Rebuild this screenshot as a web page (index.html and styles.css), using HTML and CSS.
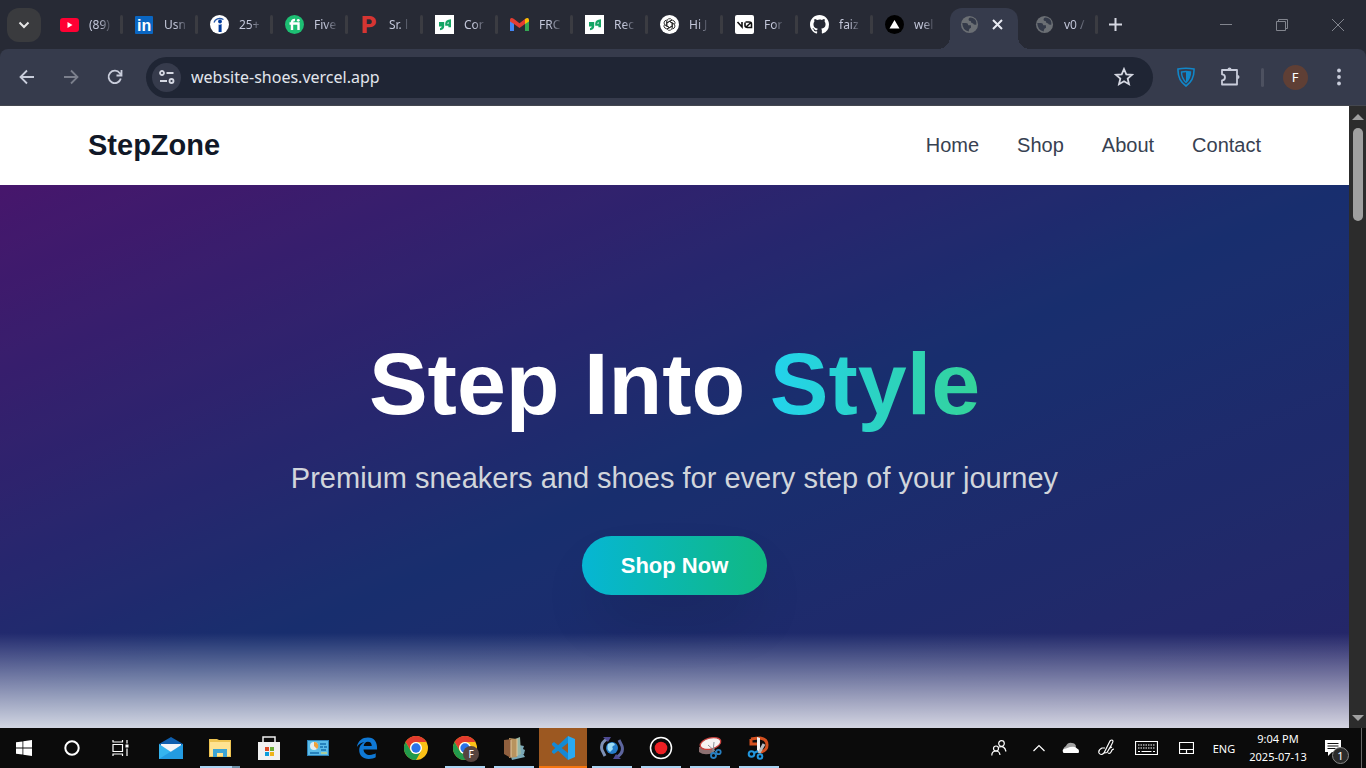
FILE: index.html
```html
<!DOCTYPE html>
<html lang="en">
  <head>
    <meta charset="UTF-8" />
    <meta name="viewport" content="width=device-width, initial-scale=1" />
    <title>StepZone</title>
    <link rel="stylesheet" href="styles.css">
  </head>
  <body>
    <svg class="defs" aria-hidden="true">
      <symbol id="globe" viewBox="0 0 20 20">
        <circle cx="10" cy="10" r="9" fill="#6b6f74" />
        <path d="M2.400 8.500h3.800q2.300.2 2.500 2.200h2.800v3q-2.200.2-2.300 3.600-6.500-.8-6.800-8.800z" fill="#343a49" />
        <path d="M10.500 2.600q-1.500.6-1.500 2.400.2 1.600 2.200 1.400.2 2.400 2.600 2.500.6 1.700 3.400 1.300.8-5.600-4.500-7.400z" fill="#343a49" />
      </symbol>
      <symbol id="quote" viewBox="0 0 19 19">
        <rect width="19" height="19" fill="#fff" />
        <path d="M4 7h5.200v4.300q0 3.400-4.200 3.900v-2q1.700-.3 1.800-1.700H4z" fill="#14a563" />
        <path d="M16 12.200h-2.600v-1.400h-3.200V8.600q.2-4 5.800-4.300z" fill="#14a563" />
        <path d="M12.300 8.800q0-1.500 1.300-1.900v1.900z" fill="#fff" />
      </symbol>
      <symbol id="chrome" viewBox="0 0 48 48">
        <circle cx="24" cy="24" r="24" fill="#fbc116" />
        <path d="M3.200 12A24 24 0 0 1 44.800 12H24a12 12 0 0 0-10.400 18z" fill="#e33b2e" />
        <path d="M3.200 12A24 24 0 0 0 24 48l10.400-18A12 12 0 0 1 13.600 30z" fill="#229a4c" />
        <circle cx="24" cy="24" r="12" fill="#fff" />
        <circle cx="24" cy="24" r="9.300" fill="#2a73e8" />
      </symbol>
    </svg>

    <!-- Tab strip -->
    <header class="tab-strip">
      <button class="tab-search" aria-label="Search tabs">
        <svg width="12" height="12" viewBox="0 0 12 12"><path d="M1.500 3.500L6 8l4.500-4.500" fill="none" stroke="#e6e6e6" stroke-width="2" /></svg>
      </button>
      <div class="tabs">
        <button class="tab">
          <svg class="favicon" viewBox="0 0 19 19"><rect y="3" width="19" height="14" rx="3" fill="#ff0033" /><path d="M7.500 7v6l5-3z" fill="#fff" /></svg>
          <span class="tab-title">(89)</span>
        </button>
        <button class="tab">
          <svg class="favicon" viewBox="0 0 19 19"><rect y="1" width="18" height="18" rx="1" fill="#0a66c2" /><text x="2" y="16" class="logo-in">in</text></svg>
          <span class="tab-title">Usn</span>
        </button>
        <button class="tab">
          <svg class="favicon" viewBox="0 0 19 19"><circle cx="9.500" cy="9.500" r="9.500" fill="#fff" /><path d="M4 7.500C5 4 9 2.300 13.500 4.500" fill="none" stroke="#2557a7" stroke-width="1.300" /><circle cx="10" cy="6.500" r="1.900" fill="#003a9b" /><path d="M8.600 9.500q1.500.5 3-.5V17h-3z" fill="#003a9b" /></svg>
          <span class="tab-title">25+</span>
        </button>
        <button class="tab">
          <svg class="favicon" viewBox="0 0 19 19"><circle cx="9.500" cy="9.500" r="9.500" fill="#1dbf73" /><path d="M4.500 8.500h9v6.500M7 15V7.300Q7 4.800 10 5" fill="none" stroke="#fff" stroke-width="2.400" /><circle cx="13.300" cy="5.300" r="1.400" fill="#fff" /></svg>
          <span class="tab-title">Five</span>
        </button>
        <button class="tab">
          <svg class="favicon" viewBox="0 0 19 19"><text x="1" y="18" class="logo-p">P</text></svg>
          <span class="tab-title">Sr. l</span>
        </button>
        <button class="tab">
          <svg class="favicon"><use href="#quote" /></svg>
          <span class="tab-title">Cor</span>
        </button>
        <button class="tab">
          <svg class="favicon" viewBox="0 0 19 19"><path d="M0 5v11h4V8z" fill="#4285f4" /><path d="M19 5v11h-4V8z" fill="#34a853" /><path d="M0 4.500Q1 2 4 4l5.500 4.200L15 4v5l-5.500 4L4 9 0 6.500z" fill="#e33d32" /><path d="M15 4q3-2 4 .5v2L15 9z" fill="#fbbc04" /></svg>
          <span class="tab-title">FRC</span>
        </button>
        <button class="tab">
          <svg class="favicon"><use href="#quote" /></svg>
          <span class="tab-title">Rec</span>
        </button>
        <button class="tab">
          <svg class="favicon" viewBox="0 0 20 20"><circle cx="10" cy="10" r="10" fill="#fff" /><g fill="none" stroke="#222" stroke-width=".9"><path id="knot" d="M7.200 11.600V6.700a2.900 2.900 0 0 1 5.300-1.600M7.200 8.300l4.300-2.500" /><use href="#knot" transform="rotate(60 10 10)" /><use href="#knot" transform="rotate(120 10 10)" /><use href="#knot" transform="rotate(180 10 10)" /><use href="#knot" transform="rotate(240 10 10)" /><use href="#knot" transform="rotate(300 10 10)" /></g></svg>
          <span class="tab-title">Hi J</span>
        </button>
        <button class="tab">
          <svg class="favicon" viewBox="0 0 19 19"><rect width="19" height="19" rx="2" fill="#fff" /><path d="M2.500 7l4.500 5V7M10.500 7H14q2.500 0 2.500 2v3.500h-4q-2.500 0-2.500-2V7.500M10.500 12.500l6-5.500" fill="none" stroke="#111" stroke-width="1.600" /></svg>
          <span class="tab-title">For</span>
        </button>
        <button class="tab">
          <svg class="favicon" viewBox="0 0 16 16"><path fill="#fff" d="M8 0C3.580 0 0 3.580 0 8c0 3.540 2.290 6.530 5.470 7.590.4.070.55-.17.55-.38 0-.19-.01-.82-.01-1.490-2.010.37-2.530-.49-2.690-.94-.09-.23-.48-.94-.82-1.130-.28-.15-.68-.52-.01-.53.63-.01 1.080.58 1.230.82.72 1.210 1.870.87 2.330.66.070-.52.28-.87.51-1.070-1.780-.2-3.640-.89-3.640-3.950 0-.87.31-1.590.82-2.150-.08-.2-.36-1.020.08-2.120 0 0 .67-.21 2.200.82A7.650 7.650 0 0 1 8 3.860c.68 0 1.360.09 2 .27 1.530-1.040 2.200-.82 2.200-.82.44 1.100.16 1.920.08 2.120.51.56.82 1.270.82 2.150 0 3.070-1.870 3.750-3.650 3.950.29.25.54.73.54 1.480 0 1.070-.01 1.930-.01 2.200 0 .21.15.46.55.38A8.010 8.010 0 0 0 16 8c0-4.420-3.580-8-8-8z" /></svg>
          <span class="tab-title">faiz</span>
        </button>
        <button class="tab no-divider">
          <svg class="favicon" viewBox="0 0 19 19"><circle cx="9.500" cy="9.500" r="9.500" fill="#000" /><path d="M9.500 5l5 8.500h-10z" fill="#fff" /></svg>
          <span class="tab-title">wel</span>
        </button>
        <div class="tab active no-divider">
          <svg class="favicon"><use href="#globe" /></svg>
          <button class="tab-close" aria-label="Close tab">
            <svg width="11" height="11" viewBox="0 0 11 11"><path d="M1 1l9 9M10 1l-9 9" stroke="#e8eaf2" stroke-width="2" /></svg>
          </button>
        </div>
        <button class="tab">
          <svg class="favicon"><use href="#globe" /></svg>
          <span class="tab-title">v0 /</span>
        </button>
      </div>
      <button class="new-tab" aria-label="New tab">
        <svg width="13" height="13" viewBox="0 0 13 13"><path d="M6.500 0v13M0 6.500h13" stroke="#d6d8e2" stroke-width="2" /></svg>
      </button>
      <div class="window-controls">
        <button aria-label="Minimize"><svg width="12" height="12" viewBox="0 0 12 12"><path d="M0 5.500h12" /></svg></button>
        <button aria-label="Restore"><svg width="12" height="12" viewBox="0 0 12 12"><path d="M.5 2.500h9v9h-9zM2.500 2.500v-2h9v9h-2" /></svg></button>
        <button aria-label="Close"><svg width="12" height="12" viewBox="0 0 12 12"><path d="M0 0l12 12M12 0L0 12" /></svg></button>
      </div>
    </header>

    <!-- Address bar -->
    <div class="toolbar">
      <button class="tool" aria-label="Back"><svg width="16" height="16" viewBox="0 0 16 16"><path d="M15 8H2M8 1.500L1.500 8 8 14.500" /></svg></button>
      <button class="tool dim" aria-label="Forward"><svg width="16" height="16" viewBox="0 0 16 16"><path d="M1 8h13M8 1.500L14.500 8 8 14.500" /></svg></button>
      <button class="tool" aria-label="Reload"><svg width="16" height="16" viewBox="0 0 16 16"><path d="M13.800 9.500A6.200 6.200 0 1 1 12.800 4.200L14.500 6M14.500 1v5.500H9.500" /></svg></button>
      <div class="omnibox">
        <button class="site-info" aria-label="View site information">
          <svg width="16" height="16" viewBox="0 0 16 16"><circle cx="3" cy="4" r="2" /><path d="M7.500 4H14.500M1 12h7" /><circle cx="12.500" cy="12" r="2" /></svg>
        </button>
        <input class="url" type="text" aria-label="Address" value="website-shoes.vercel.app" />
        <button class="star" aria-label="Bookmark this tab">
          <svg width="20" height="20" viewBox="0 0 20 20"><path d="M10 2l2.300 5.300 5.700.5-4.300 3.800 1.300 5.600-5-3-5 3 1.300-5.600L2 7.800l5.700-.5z" /></svg>
        </button>
      </div>
      <button class="tool" aria-label="VPN extension">
        <svg width="18" height="20" viewBox="0 0 18 20"><path d="M1 2q8-1.500 16 0 .5 11-8 17Q.5 13 1 2z" stroke="#1187c9" stroke-width="1.600" /><path d="M4.500 5Q9 4 13.500 5 13.500 11 9 15.500 4.500 11 4.500 5z" stroke="#1187c9" stroke-width="1.400" /><path d="M9 4.500v11q4.500-4.500 4.500-10.500z" fill="#1187c9" stroke="none" /></svg>
      </button>
      <button class="tool" aria-label="Extensions">
        <svg width="20" height="20" viewBox="0 0 20 20"><path d="M2 3h15v14.500H2v-4.200a3 3 0 0 0 0-6z" stroke-linejoin="round" /><path d="M7.500 2.500a2 2 0 0 1 4 0zM17.500 8a2 2 0 0 1 0 4z" fill="#c9cddb" stroke="none" /></svg>
      </button>
      <span class="tool-divider"></span>
      <button class="tool" aria-label="Profile"><span class="avatar">F</span></button>
      <button class="tool" aria-label="Menu"><svg width="4" height="18" viewBox="0 0 4 18"><g fill="#c9cddb" stroke="none"><circle cx="2" cy="2.500" r="1.900" /><circle cx="2" cy="9" r="1.900" /><circle cx="2" cy="15.500" r="1.900" /></g></svg></button>
    </div>

    <!-- Web page -->
    <div class="viewport">
      <main class="page">
        <nav class="navbar">
          <a class="brand" href="#">StepZone</a>
          <div class="nav-links">
            <a href="#">Home</a>
            <a href="#">Shop</a>
            <a href="#">About</a>
            <a href="#">Contact</a>
          </div>
        </nav>
        <section class="hero">
          <h1>Step Into <span class="accent">Style</span></h1>
          <p>Premium sneakers and shoes for every step of your journey</p>
          <button class="shop-button">Shop Now</button>
        </section>
      </main>
      <div class="scrollbar">
        <svg width="12" height="6" viewBox="0 0 12 6"><path d="M6 0l6 6H0z" fill="#a0a0a0" /></svg>
        <div class="scroll-track"><div class="scroll-thumb"></div></div>
        <svg width="12" height="6" viewBox="0 0 12 6"><path d="M6 6l6-6H0z" fill="#a0a0a0" /></svg>
      </div>
    </div>

    <!-- Taskbar -->
    <footer class="taskbar">
      <div class="system-buttons">
        <button aria-label="Start"><svg width="16" height="16" viewBox="0 0 16 16" fill="#fff"><path d="M0 2.300L6.500 1.400v6.200H0zM7.300 1.300L16 0v7.600H7.300zM0 8.400h6.500v6.200L0 13.700zM7.300 8.400H16V16l-8.700-1.300z" /></svg></button>
        <button aria-label="Search"><svg width="16" height="16" viewBox="0 0 16 16"><circle cx="8" cy="8" r="6.700" fill="none" stroke="#fff" stroke-width="2" /></svg></button>
        <button aria-label="Task view"><svg width="17" height="16" viewBox="0 0 17 16" fill="none" stroke="#fff" stroke-width="1.200"><path d="M1 4.500h9.500v7H1zM1 0v2h9.500V0M1 16v-2h9.500v2M15 0v3.500M15 8.500V16" /><path d="M13.500 4.500h3v3h-3z" fill="#fff" stroke="none" /></svg></button>
      </div>
      <div class="app-buttons">
        <button aria-label="Mail"><svg width="24" height="24" viewBox="0 0 24 24"><path d="M0 8L12 1l12 7v4H0z" fill="#0f5fae" /><path d="M2 8h20v8H2z" fill="#f3f6f8" /><path d="M0 8l12 8 12-8v15H0z" fill="#35b4ee" /><path d="M0 23L24 8v15z" fill="#188bd8" opacity=".6" /></svg></button>
        <button class="running stacked" aria-label="File Explorer"><svg width="24" height="24" viewBox="0 0 24 24"><path d="M1 3h8l2 1h12v17H1z" fill="#edc351" /><path d="M2 6h20v14H2z" fill="#ffe391" /><path d="M5 21v-8h14v8h-4v-4H9v4z" fill="#3ca5d5" /></svg></button>
        <button aria-label="Store"><svg width="24" height="24" viewBox="0 0 24 24"><path d="M6 7V1h12v6" fill="none" stroke="#eee" stroke-width="1.500" /><path d="M1 6h22v18H1z" fill="#f1f1f1" /><path d="M8 11h4v4H8z" fill="#df4b26" /><path d="M13 11h4v4h-4z" fill="#6cad35" /><path d="M8 16h4v4H8z" fill="#0c9ddc" /><path d="M13 16h4v4h-4z" fill="#efb41a" /></svg></button>
        <button aria-label="Control Panel"><svg width="24" height="24" viewBox="0 0 24 24"><rect x="1.500" y="4.500" width="21" height="15" fill="#5bbce9" stroke="#2c80b6" /><circle cx="8" cy="10" r="4" fill="#e4edf2" /><path d="M8 10V6a4 4 0 0 1 3 7z" fill="#f2a13a" /><path d="M14 8h6M14 11h3M18 11h3M15 14h5M4 17h9" stroke="#176fae" stroke-width="1.500" /><path d="M15 17h6" stroke="#f7db53" /></svg></button>
        <button aria-label="Edge"><svg width="22" height="22" viewBox="0 0 24 24"><path fill="#0f78d4" d="M1 11C2 4 7 .5 13 .5c7 0 10.500 5 10 13H8.200c.3 4 3.300 6 7 6 2.500 0 4.800-.7 6.300-1.700v4.400C19.500 23.300 17 24 14 24 7.500 24 3.500 19.800 3.500 14.500 3.500 10 6 7 9.800 5.500 6 5.900 3 7.800 1 11zM8.400 9.800h8.800c0-3-1.500-4.700-4.200-4.700-2.600 0-4.200 1.800-4.600 4.700z" /></svg></button>
        <button aria-label="Chrome"><svg width="24" height="24"><use href="#chrome" /></svg></button>
        <button class="running" aria-label="Chrome, profile F"><svg width="24" height="24"><use href="#chrome" /></svg><span class="profile-badge">F</span></button>
        <button class="running" aria-label="Library"><svg width="24" height="24" viewBox="0 0 24 24"><path d="M8 18l12-2 3 5-13 3zM17 9l5 1-1 3 2 1-1 4-7 1z" fill="#7aa8b6" /><path d="M13 3l5-2 1 17-6 3z" fill="#96b6a6" /><path d="M7 2l8 1v18l-8 1z" fill="#b8935e" /><path d="M2 4l7-1v19l-7-4z" fill="#8f5f3e" /><path d="M9 4v17M15 3v17" stroke="#e1c79b" /></svg></button>
        <button class="running current" aria-label="Visual Studio Code"><svg width="24" height="24" viewBox="0 0 24 24"><path d="M17 0l7 3v18l-7 3z" fill="#29a9f1" /><path d="M1 7.500L3 6l14 11v7L1 9z" fill="#1688d4" /><path d="M1 16.500L3 18 17 7V0L1 15z" fill="#148bd3" /></svg></button>
        <button class="running" aria-label="Web sync"><svg width="24" height="24" viewBox="0 0 24 24"><circle cx="12" cy="12" r="6" fill="#257cc9" /><path d="M8 8q6-3 7 1-4 1-2 4l-3 3q-4-3-2-8z" fill="#9cdcf5" /><path d="M7 3Q0 7 2 14l3 6" fill="none" stroke="#7d90b4" stroke-width="3" /><path d="M17 21q7-4 5-11l-3-6" fill="none" stroke="#5d659e" stroke-width="3" /><path d="M3 1h8L8 6zM13 23h8l-5-5z" fill="#4e4a93" /></svg></button>
        <button class="running" aria-label="Recorder"><svg width="24" height="24" viewBox="0 0 24 24"><circle cx="12" cy="12" r="10.500" fill="#0b0b0b" stroke="#fff" stroke-width="1.500" /><circle cx="12" cy="12" r="6.300" fill="#ee2024" /></svg></button>
        <button class="running" aria-label="Snipping Tool"><svg width="24" height="24" viewBox="0 0 24 24"><path d="M1 11v5q5 4 14 1l3-7z" fill="#8d7071" /><ellipse cx="12.500" cy="7.500" rx="10.500" ry="5.500" transform="rotate(-14 12.500 7.500)" fill="#f6f3f3" stroke="#c8423e" stroke-width="1.300" /><path d="M10 9l8 7M16 6l-1 10" stroke="#8a9199" /><g fill="none" stroke="#287fc0" stroke-width="1.800"><circle cx="15.500" cy="19.500" r="2.500" /><circle cx="20.500" cy="16" r="2.200" /></g></svg></button>
        <button class="running" aria-label="Snip &amp; Sketch"><svg width="24" height="24" viewBox="0 0 24 24"><path d="M4 3q6-1 9-1 7 1 7 7 0 6-7 7M4 3v5h6" fill="none" stroke="#d4501f" stroke-width="3" /><path d="M10 1l3 1v15l-3-1z" fill="#f3f3f3" /><path d="M17 8l-5 9" stroke="#b8bbc0" stroke-width="3" /><g fill="none" stroke="#2296dd" stroke-width="2"><circle cx="4.500" cy="18" r="2.800" /><circle cx="13" cy="20.500" r="2.300" /><path d="M7 17l4-2" /></g></svg></button>
      </div>
      <div class="tray">
        <button class="tray-wide" aria-label="People"><svg width="16" height="16" viewBox="0 0 16 16"><circle cx="10.500" cy="3.500" r="2.800" /><circle cx="5" cy="8.500" r="2.500" /><path d="M.8 15.500q0-4.500 4.200-4.500 3.500 0 4 4M8 7q5.500-2 7 4.500" /></svg></button>
        <button class="tray-wide" aria-label="Show hidden icons"><svg width="12" height="8" viewBox="0 0 12 8"><path d="M.5 7L6 1.500 11.500 7" /></svg></button>
        <button class="tray-narrow" aria-label="OneDrive"><svg width="18" height="12" viewBox="0 0 18 12"><path d="M2 10Q0 6 4 4q2-4 6-3 3 0 4 3l-2 5z" fill="#a3a3a3" stroke="none" /><path d="M1.500 11Q-1 7 4 6.500l4-1.500q6-1 7 1.500 3 1 1.500 4.500z" fill="#fff" stroke="none" /></svg></button>
        <button class="tray-pen" aria-label="Windows Ink"><svg width="18" height="18" viewBox="0 0 18 18"><path d="M6 14L12 2q2-2 3 0 .5 1-6 11.500zM7 9H4q-4 2-3 5 2 3 5 0M10 14q2 1 3-1 1-3 3-3M12 9l2-1" /></svg></button>
        <button class="tray-key" aria-label="Touch keyboard"><svg width="23" height="14" viewBox="0 0 23 14"><path d="M.5.5h22v13H.5z" /><path d="M3 4h17M3 7h17" stroke-dasharray="1.500 1" /><path d="M3 10.500h2M6.500 10.500h10M18 10.500h2" /></svg></button>
        <button class="tray-pad" aria-label="Touchpad"><svg width="15" height="12" viewBox="0 0 15 12"><path d="M.5.5h14v11H.5zM.5 7.500h14M7.500 7.500v4" /></svg></button>
        <button class="tray-lang">ENG</button>
        <button class="tray-clock"><time>9:04 PM</time><time>2025-07-13</time></button>
        <button class="tray-note" aria-label="Notifications">
          <svg width="16" height="16" viewBox="0 0 16 16"><path d="M0 0h16v12H7l-4 4v-4H0z" fill="#fff" stroke="none" /><path d="M2.500 3.500h11M2.500 6h11M2.500 8.500h8" stroke="#111" /></svg>
          <span class="note-count">1</span>
        </button>
        <button class="show-desktop" aria-label="Show desktop"></button>
      </div>
    </footer>
  </body>
</html>
```

FILE: styles.css
```css
:root {
  --strip: #272a35;
  --toolbar: #363b4c;
  --omnibox: #1f2534;
  --tab-text: #c3c7da;
  --taskbar: #0b0b0b;
  --scroll: #2c2c2c;
  --ui-font: 'Noto Sans', 'Open Sans', sans-serif;
  --page-font: 'Liberation Sans', Arial, sans-serif;
}

* {
  box-sizing: border-box;
}

body {
  margin: 0;
  height: 100vh;
  display: flex;
  flex-direction: column;
  overflow: hidden;
  font-family: var(--ui-font);
  background: var(--strip);
}

button {
  display: flex;
  align-items: center;
  justify-content: center;
  flex-shrink: 0;
  padding: 0;
  border: none;
  background: none;
  color: inherit;
  font: inherit;
  cursor: pointer;
}

svg {
  display: block;
}

.defs {
  position: absolute;
  width: 0;
  height: 0;
}

/* Tab strip */
.tab-strip {
  display: flex;
  align-items: stretch;
  height: 49px;
  flex-shrink: 0;
  padding-left: 7px;
}

.tab-search {
  align-self: center;
  width: 34px;
  height: 34px;
  margin-right: 7px;
  border-radius: 12px;
  background: #3a3b3e;
}

.tabs {
  display: flex;
  flex: 0 1 1050px;
  min-width: 0;
}

.tab {
  position: relative;
  display: flex;
  flex: 0 1 75px;
  min-width: 0;
  align-items: center;
  justify-content: flex-start;
  gap: 10px;
  padding-left: 12px;
  color: var(--tab-text);
  font-size: 12px;
}
.tab::after {
  content: '';
  position: absolute;
  right: 0;
  top: 15px;
  width: 3px;
  height: 19px;
  border-radius: 2px;
  background: #3b3c42;
}
.tab.no-divider::after {
  display: none;
}

.tab.active {
  flex-basis: 68px;
  margin-top: 8px;
  margin-right: 5px;
  margin-left: 2px;
  padding-bottom: 8px;
  padding-left: 10px;
  gap: 13px;
  border-radius: 12px 12px 0 0;
  background: var(--toolbar);
}
.tab.active::before,
.tab.active::after {
  content: '';
  display: block;
  position: absolute;
  top: auto;
  bottom: 0;
  width: 12px;
  height: 12px;
  border-radius: 0;
}
.tab.active::before {
  left: -12px;
  background: radial-gradient(circle at 0 0, transparent 12px, var(--toolbar) 12px);
}
.tab.active::after {
  right: -12px;
  background: radial-gradient(circle at 100% 0, transparent 12px, var(--toolbar) 12px);
}

.favicon {
  width: 19px;
  height: 19px;
  flex-shrink: 0;
}

.logo-in {
  font: bold 16px var(--page-font);
  fill: #fff;
}

.logo-p {
  font: 900 24px Roboto, sans-serif;
  fill: #d63532;
}

.tab-title {
  white-space: nowrap;
  mask-image: linear-gradient(to right, #000 50%, rgba(0, 0, 0, 0.2));
}

.new-tab {
  width: 35px;
}

.window-controls {
  display: flex;
  margin-left: auto;
}
.window-controls button {
  width: 56px;
}
.window-controls path {
  fill: none;
  stroke: #82858e;
}

/* Address bar */
.toolbar {
  display: flex;
  align-items: center;
  height: 57px;
  flex-shrink: 0;
  padding: 0 5px;
  border-bottom: 1px solid #44474f;
  border-radius: 8px 8px 0 0;
  background: var(--toolbar);
}

.tool {
  width: 44px;
  height: 44px;
}
.tool svg {
  fill: none;
  stroke: #c9cddb;
  stroke-width: 1.8;
}
.tool.dim svg {
  stroke: #7b7f8c;
}

.tool-divider {
  width: 3px;
  height: 19px;
  margin: 0 9px;
  border-radius: 2px;
  background: #4d5160;
}

.avatar {
  width: 25px;
  border-radius: 50%;
  background: #5f3f35;
  color: #fff;
  font-size: 13px;
  line-height: 25px;
}

.omnibox {
  display: flex;
  flex: 1;
  align-items: center;
  height: 41px;
  margin: 0 11px 0 9px;
  padding: 0 12px 0 6px;
  border-radius: 21px;
  background: var(--omnibox);
}

.site-info {
  width: 29px;
  height: 29px;
  border-radius: 50%;
  background: var(--toolbar);
}

.site-info svg,
.star svg {
  fill: none;
  stroke: #d5d8e2;
  stroke-width: 1.8;
}

.url {
  flex: 1;
  min-width: 0;
  padding: 0 10px;
  border: none;
  outline: none;
  background: none;
  color: #e2e5ec;
  font: 16px var(--ui-font);
}

.star {
  width: 34px;
  height: 34px;
}

/* Web page */
.viewport {
  display: flex;
  flex: 1;
  min-height: 0;
}

.page {
  display: flex;
  flex: 1;
  flex-direction: column;
  min-width: 0;
  overflow: hidden;
  font-family: var(--page-font);
}

.navbar {
  display: flex;
  align-items: center;
  justify-content: space-between;
  flex-shrink: 0;
  height: 79px;
  padding: 0 88px;
  background: #fff;
}

.brand {
  color: #111827;
  font-size: 29px;
  font-weight: bold;
  text-decoration: none;
}

.nav-links {
  display: flex;
  gap: 38px;
}
.nav-links a {
  color: #374151;
  font-size: 20px;
  line-height: 29px;
  text-decoration: none;
}

/* Taller than the space under the navbar, so the fade runs past the fold */
.hero {
  position: relative;
  display: flex;
  flex: 0 0 91%;
  flex-direction: column;
  align-items: center;
  justify-content: center;
  padding-bottom: 2px;
  background:
    linear-gradient(rgba(0, 0, 0, 0.2), rgba(0, 0, 0, 0.2)),
    linear-gradient(to bottom right, #581c87, #1e3a8a, #312e81);
  text-align: center;
}
.hero::after {
  content: '';
  position: absolute;
  right: 0;
  bottom: 0;
  left: 0;
  height: 118px;
  background: linear-gradient(to top, #fff, rgba(255, 255, 255, 0));
}

.hero h1 {
  margin: 0;
  color: #fff;
  font-size: 88px;
  line-height: 88px;
}

.accent {
  background: linear-gradient(to right, #22d3ee, #34d399);
  background-clip: text;
  -webkit-background-clip: text;
  color: transparent;
  /* room for the descender inside the clipped background */
  padding-bottom: 8px;
}

.hero p {
  margin: 31px 0 38px;
  color: #d1d5db;
  font-size: 29px;
  line-height: 39px;
}

.shop-button {
  padding: 15px 39px;
  border-radius: 30px;
  background: linear-gradient(to right, #06b6d4, #10b981);
  box-shadow: 0 30px 60px -15px rgba(0, 0, 0, 0.2);
  color: #fff;
  font-size: 22px;
  font-weight: bold;
  line-height: 29px;
}

.scrollbar {
  display: flex;
  flex-direction: column;
  align-items: center;
  gap: 8px;
  width: 17px;
  padding: 8px 0 7px;
  background: var(--scroll);
}

.scroll-track {
  flex: 1;
}

.scroll-thumb {
  width: 10px;
  height: 16%;
  border-radius: 5px;
  background: #a0a0a0;
}

/* Taskbar */
.taskbar {
  display: flex;
  height: 40px;
  flex-shrink: 0;
  background: var(--taskbar);
  color: #fff;
}

.system-buttons,
.app-buttons {
  display: flex;
}
.system-buttons button,
.app-buttons button {
  position: relative;
  width: 48px;
}

.app-buttons {
  gap: 1px;
  margin-left: 3px;
}

.running::after {
  content: '';
  position: absolute;
  right: 4px;
  bottom: 0;
  left: 4px;
  height: 2px;
  background: #a9d3f2;
}
.stacked::after {
  background: linear-gradient(to right, #a9d3f2 80%, #6b8ea5 80%);
}

.current {
  background: #9c5821;
}
.current::after {
  right: 0;
  left: 0;
  background: #f5750f;
}

.profile-badge {
  position: absolute;
  right: 10px;
  bottom: 6px;
  width: 16px;
  border-radius: 50%;
  background: #57443f;
  font-size: 10px;
  line-height: 16px;
}

.tray {
  display: flex;
  margin-left: auto;
}
.tray svg {
  fill: none;
  stroke: #fff;
  stroke-width: 1.2;
}

.tray-wide {
  width: 40px;
}
.tray-narrow {
  width: 24px;
}
.tray-pen {
  width: 48px;
}
.tray-key {
  width: 30px;
}
.tray-pad {
  width: 50px;
}
.tray-lang {
  width: 26px;
  font-size: 11px;
}

.tray-clock {
  flex-direction: column;
  width: 82px;
  font-size: 11px;
  line-height: 18px;
}

.tray-note {
  position: relative;
  width: 36px;
  padding-right: 8px;
}

.note-count {
  position: absolute;
  right: 6px;
  bottom: 4px;
  width: 17px;
  border: 1px solid #888;
  border-radius: 50%;
  background: #2b2b2b;
  font-size: 11px;
  line-height: 15px;
}

.show-desktop {
  width: 5px;
  margin-left: 6px;
  border-left: 1px solid #666;
}
```
